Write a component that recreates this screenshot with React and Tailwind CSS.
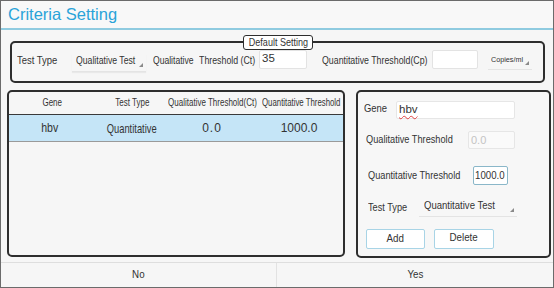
import React from "react";

const S = { fontFamily: "'Liberation Sans', Arial, sans-serif" };

function Tri() {
  return (
    <span className="absolute right-[3px] bottom-[4px] w-0 h-0 border-l-[4px] border-l-transparent border-b-[4px] border-b-[#8a8a8a]" />
  );
}

export default function App() {
  return (
    <div
      className="w-[554px] h-[288px] bg-[#f6f6f6] border border-[#6b6b6b] flex flex-col text-[#333] overflow-hidden leading-none"
      style={S}
    >
      {/* Title */}
      <div className="h-[29px] shrink-0 flex items-center pl-[7px] pb-[1px] border-b-2 border-[#8fcbe0] bg-[#f8f8f8]">
        <span className="text-[16.5px] text-[#2aa3d8]">Criteria Setting</span>
      </div>

      {/* Default setting */}
      <div className="relative mt-[11px] ml-[9px] w-[535px] h-[42px] shrink-0 border-2 border-[#2e2e2e] rounded-[5px] flex items-center pb-[3px] text-[11px]">
        <div className="absolute left-[231px] top-[-8px] h-[15px] w-[70px] bg-white border-[1.5px] border-[#2e2e2e] rounded-[3px] flex items-center justify-center text-[10.5px]">
          <span className="inline-block whitespace-nowrap scale-x-[0.86] origin-center">Default Setting</span>
        </div>
        <div className="ml-[5px] w-[55px]">
          <span className="inline-block whitespace-nowrap scale-x-[0.86] origin-left">Test Type</span>
        </div>
        <div className="relative w-[74px] h-[18px] mt-[5px] flex items-center pl-[4px] pb-[4px] border-b border-[#e4e4e4] shadow-[0_1px_1px_rgba(0,0,0,0.05)]">
          <span className="inline-block whitespace-nowrap scale-x-[0.79] origin-left">Qualitative Test</span>
          <Tri />
        </div>
        <div className="ml-[7px] w-[46px]">
          <span className="inline-block whitespace-nowrap scale-x-[0.78] origin-left">Qualitative</span>
        </div>
        <div className="w-[60px]">
          <span className="inline-block whitespace-nowrap scale-x-[0.8] origin-left">Threshold (Ct)</span>
        </div>
        <div className="w-[48px] h-[19px] mt-[-3px] bg-white border border-[#e3e3e3] rounded-[2px] flex items-center pl-[2px] text-[11.5px]">
          35
        </div>
        <div className="ml-[15px] w-[110px]">
          <span className="inline-block whitespace-nowrap scale-x-[0.8] origin-left">Quantitative Threshold(Cp)</span>
        </div>
        <div className="w-[46px] h-[19px] mt-[-3px] bg-white border border-[#e3e3e3] rounded-[2px]" />
        <div className="relative ml-[10px] w-[44px] h-[18px] flex items-center pl-[3px] text-[8px] border-b border-[#e4e4e4]">
          <span className="inline-block whitespace-nowrap scale-x-[0.9] origin-left">Copies/ml</span>
          <Tri />
        </div>
      </div>

      {/* Panels */}
      <div className="flex mt-[7px] ml-[6px] shrink-0">
        {/* Table */}
        <div className="w-[338px] h-[167px] border-2 border-[#2e2e2e] rounded-[5px] overflow-hidden">
          <div className="flex h-[23px] items-center text-[10px] border-b border-[#3a3a3a]">
            <div className="w-[86px] flex justify-center">
              <span className="inline-block whitespace-nowrap scale-x-[0.8] origin-center">Gene</span>
            </div>
            <div className="w-[70px] flex justify-center pl-[4px]">
              <span className="inline-block whitespace-nowrap scale-x-[0.8] origin-center">Test Type</span>
            </div>
            <div className="w-[94px] flex justify-center">
              <span className="inline-block whitespace-nowrap scale-x-[0.8] origin-center">Qualitative Threshold(Ct)</span>
            </div>
            <div className="w-[84px] flex justify-center">
              <span className="inline-block whitespace-nowrap scale-x-[0.78] origin-center">Quantitative Threshold</span>
            </div>
          </div>
          <div className="flex h-[27px] items-center bg-[#c5e5f7] border-b border-[#9a9a9a] text-[12px]">
            <div className="w-[86px] flex justify-center pr-[4px]">
              <span className="inline-block whitespace-nowrap scale-x-[0.88] origin-center">hbv</span>
            </div>
            <div className="w-[70px] flex justify-center pl-[4px] text-[13px]">
              <span className="inline-block whitespace-nowrap scale-x-[0.72] origin-center">Quantitative</span>
            </div>
            <div className="w-[94px] flex justify-center tracking-[1px]">0.0</div>
            <div className="w-[84px] flex justify-center pr-[4px]">1000.0</div>
          </div>
        </div>

        {/* Form */}
        <div className="ml-[11px] w-[195px] h-[168px] border-2 border-[#2e2e2e] rounded-[5px] bg-[#f7f7f7] text-[11.5px] flex flex-col">
          <div className="flex items-center mt-[9px] ml-[6px] h-[18px]">
            <div className="w-[32px] mt-[-3px]">
              <span className="inline-block whitespace-nowrap scale-x-[0.82] origin-left">Gene</span>
            </div>
            <div className="w-[119px] h-[18px] bg-white border border-[#e6e6e6] rounded-[2px] flex items-center pl-[2px]">
              <span className="underline decoration-wavy decoration-[#e04040] decoration-[1px] underline-offset-[2px]">hbv</span>
            </div>
          </div>
          <div className="flex items-center mt-[12px] ml-[8px] h-[18px]">
            <div className="w-[102px]">
              <span className="inline-block whitespace-nowrap scale-x-[0.8] origin-left">Qualitative Threshold</span>
            </div>
            <div className="w-[47px] h-[18px] bg-[#fafafa] border border-[#e6e6e6] rounded-[2px] flex items-center pl-[2px] text-[#c4c4c4] text-[11px]">
              0.0
            </div>
          </div>
          <div className="flex items-center mt-[17px] ml-[10px] h-[19px]">
            <div className="w-[105px]">
              <span className="inline-block whitespace-nowrap scale-x-[0.8] origin-left">Quantitative Threshold</span>
            </div>
            <div className="w-[35px] h-[19px] bg-white border border-[#8ab7c9] rounded-[2px] flex items-center pl-[1px] text-[11px]">
              <span className="inline-block whitespace-nowrap scale-x-[0.88] origin-left">1000.0</span>
            </div>
          </div>
          <div className="flex items-center mt-[14px] ml-[10px] h-[18px]">
            <div className="w-[51px]">
              <span className="inline-block whitespace-nowrap scale-x-[0.8] origin-left">Test Type</span>
            </div>
            <div className="relative w-[98px] h-[18px] flex items-center pl-[5px] pb-[3px] border-b border-[#e4e4e4]">
              <span className="inline-block whitespace-nowrap scale-x-[0.83] origin-left">Quantitative Test</span>
              <Tri />
            </div>
          </div>
          <div className="flex items-center mt-[12px] ml-[8px]">
            <div className="w-[59px] h-[20px] bg-white border border-[#a8d4e6] rounded-[2px] flex items-center justify-center">
              <span className="inline-block whitespace-nowrap scale-x-[0.85] origin-center">Add</span>
            </div>
            <div className="ml-[9px] w-[60px] h-[20px] bg-white border border-[#a8d4e6] rounded-[2px] flex items-center justify-center pb-[2px]">
              <span className="inline-block whitespace-nowrap scale-x-[0.85] origin-center">Delete</span>
            </div>
          </div>
        </div>
      </div>

      {/* Bottom bar */}
      <div className="mt-[4px] flex-1 flex border-t border-[#dedede] text-[11.5px]">
        <div className="w-[276px] flex items-center justify-center border-r border-[#e2e2e2]">
          <span className="inline-block whitespace-nowrap scale-x-[0.85] origin-center">No</span>
        </div>
        <div className="flex-1 flex items-center justify-center">
          <span className="inline-block whitespace-nowrap scale-x-[0.85] origin-center">Yes</span>
        </div>
      </div>
    </div>
  );
}
